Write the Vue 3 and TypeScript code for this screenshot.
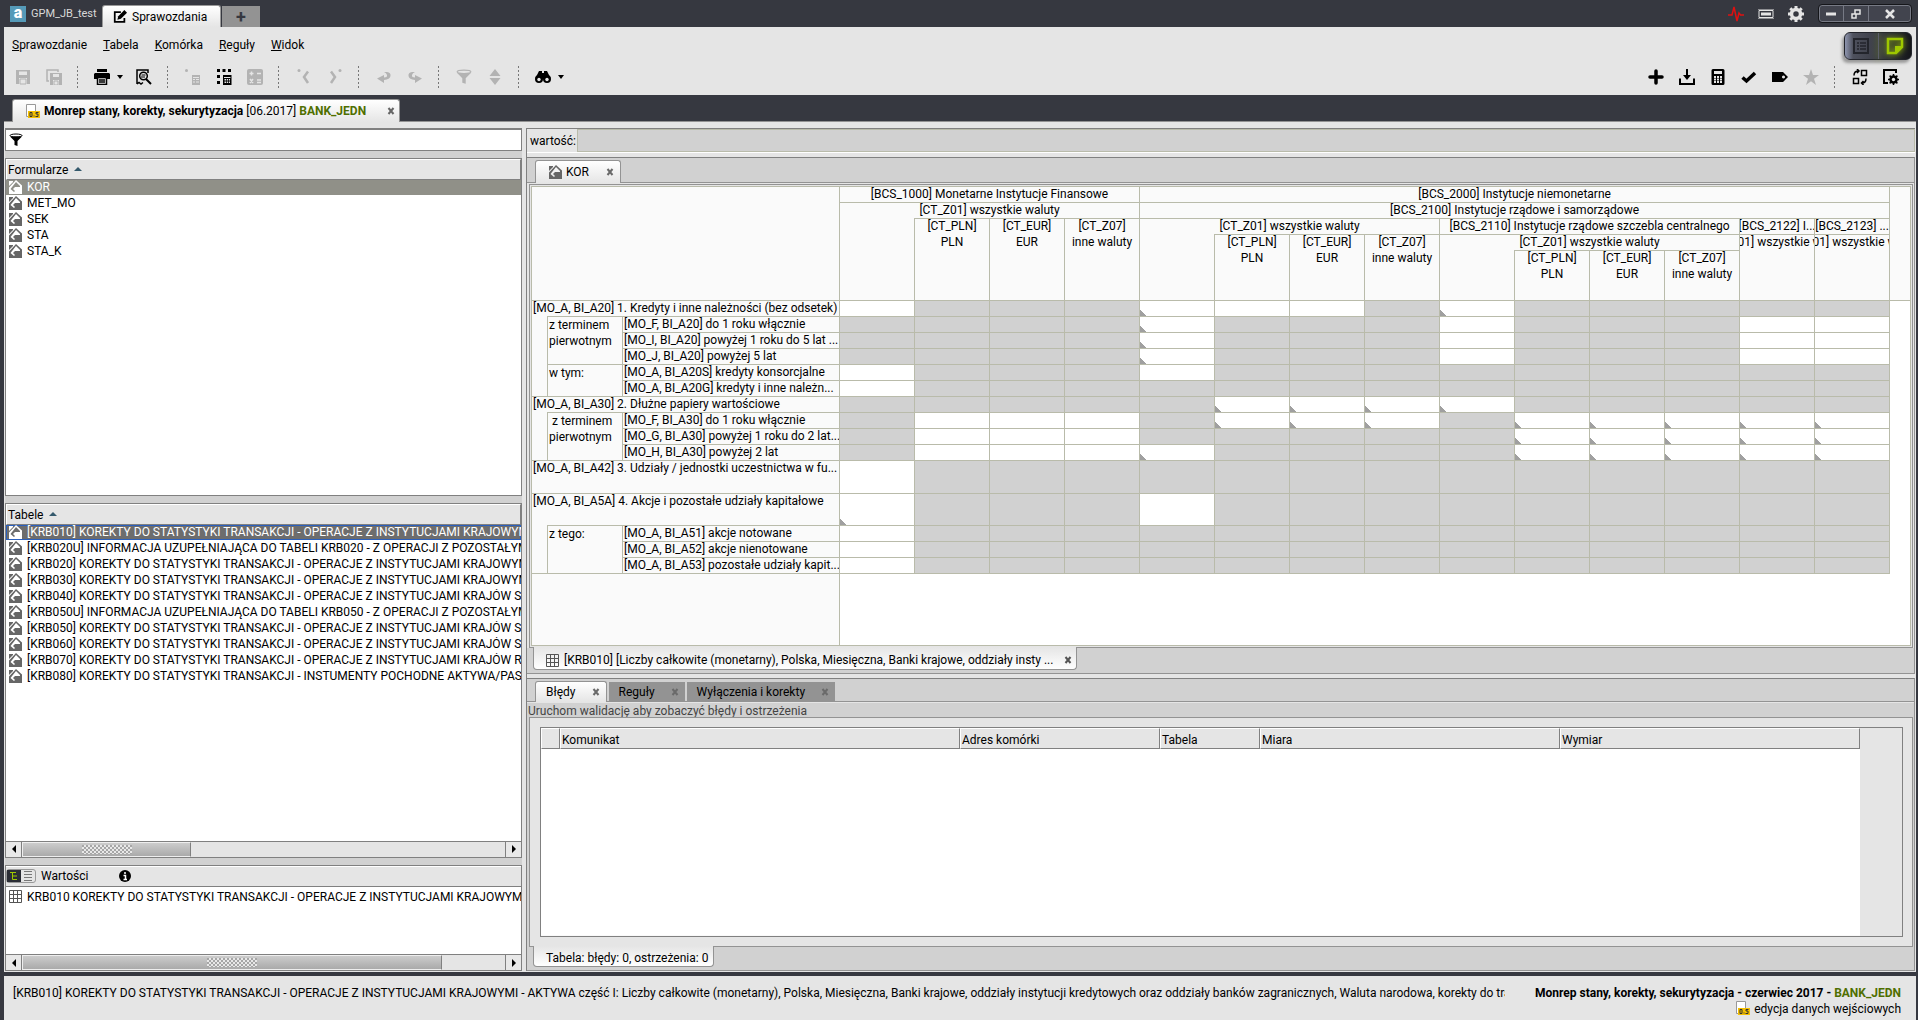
<script setup lang="ts">
import { ref } from 'vue'

interface HeadCell { text: string; sub?: string; cols?: number; rows?: number; cls?: string }
interface RowHead { text: string; cols?: number; rows?: number; cls: string }
interface DataRow { heads: RowHead[]; cells: string; cls?: string }

const menu = ['Sprawozdanie', 'Tabela', 'Komórka', 'Reguły', 'Widok']

const forms = ['KOR', 'MET_MO', 'SEK', 'STA', 'STA_K']
const selectedForm = ref('KOR')

const tables = [
  '[KRB010] KOREKTY DO STATYSTYKI TRANSAKCJI - OPERACJE Z INSTYTUCJAMI KRAJOWYMI - AKTYWA',
  '[KRB020U] INFORMACJA UZUPEŁNIAJĄCA DO TABELI KRB020 - Z OPERACJI Z POZOSTAŁYMI INSTYTUCJAMI',
  '[KRB020] KOREKTY DO STATYSTYKI TRANSAKCJI - OPERACJE Z INSTYTUCJAMI KRAJOWYMI - AKTYWA',
  '[KRB030] KOREKTY DO STATYSTYKI TRANSAKCJI - OPERACJE Z INSTYTUCJAMI KRAJOWYMI - AKTYWA',
  '[KRB040] KOREKTY DO STATYSTYKI TRANSAKCJI - OPERACJE Z INSTYTUCJAMI KRAJÓW STREFY EURO',
  '[KRB050U] INFORMACJA UZUPEŁNIAJĄCA DO TABELI KRB050 - Z OPERACJI Z POZOSTAŁYMI INSTYTUCJAMI',
  '[KRB050] KOREKTY DO STATYSTYKI TRANSAKCJI - OPERACJE Z INSTYTUCJAMI KRAJÓW STREFY EURO',
  '[KRB060] KOREKTY DO STATYSTYKI TRANSAKCJI - OPERACJE Z INSTYTUCJAMI KRAJÓW STREFY EURO',
  '[KRB070] KOREKTY DO STATYSTYKI TRANSAKCJI - OPERACJE Z INSTYTUCJAMI KRAJÓW RESZTY ŚWIATA',
  '[KRB080] KOREKTY DO STATYSTYKI TRANSAKCJI - INSTUMENTY POCHODNE AKTYWA/PASYWA',
]
const selectedTable = ref(0)

const currencies = (rows: number): HeadCell[] => [
  { text: '', rows, cls: 'open' },
  { text: '[CT_PLN]', sub: 'PLN', rows },
  { text: '[CT_EUR]', sub: 'EUR', rows },
  { text: '[CT_Z07]', sub: 'inne waluty', rows },
]
const allCur = '[CT_Z01] wszystkie waluty'
const headRows: HeadCell[][] = [
  [
    { text: '', cols: 3, rows: 5, cls: 'corner' },
    { text: '[BCS_1000] Monetarne Instytucje Finansowe', cols: 4 },
    { text: '[BCS_2000] Instytucje niemonetarne', cols: 10 },
    { text: '', rows: 5 },
  ],
  [
    { text: allCur, cols: 4 },
    { text: '[BCS_2100] Instytucje rządowe i samorządowe', cols: 10 },
  ],
  [
    ...currencies(3),
    { text: allCur, cols: 4 },
    { text: '[BCS_2110] Instytucje rządowe szczebla centralnego', cols: 4 },
    { text: '[BCS_2122] I...' },
    { text: '[BCS_2123] ...' },
  ],
  [
    ...currencies(2),
    { text: allCur, cols: 4 },
    { text: allCur, rows: 2 },
    { text: allCur, rows: 2 },
  ],
  currencies(1),
]

const top = (text: string): RowHead => ({ text, cols: 3, cls: 'lvl1' })
const leaf = (text: string): RowHead => ({ text, cls: 'lvl3' })
const indent = (rows: number): RowHead => ({ text: '', rows, cls: 'indent' })
const group = (text: string, rows: number): RowHead => ({ text, rows, cls: 'lvl2' })

// g – blocked cell, w – editable cell, t – editable cell with a corner mark
const dataRows: DataRow[] = [
  { heads: [top('[MO_A, BI_A20] 1. Kredyty i inne należności (bez odsetek)')], cells: 'wgggtwwgtggggg' },
  { heads: [indent(5), group('z terminem pierwotnym', 3), leaf('[MO_F, BI_A20] do 1 roku włącznie')], cells: 'ggggtgggwgggww' },
  { heads: [leaf('[MO_I, BI_A20] powyżej 1 roku do 5 lat ...')], cells: 'ggggtgggwgggww' },
  { heads: [leaf('[MO_J, BI_A20] powyżej 5 lat')], cells: 'ggggtgggwgggww' },
  { heads: [group('w tym:', 2), leaf('[MO_A, BI_A20S] kredyty konsorcjalne')], cells: 'wgggwggggggggg' },
  { heads: [leaf('[MO_A, BI_A20G] kredyty i inne należn...')], cells: 'wggggggggggggg' },
  { heads: [top('[MO_A, BI_A30] 2. Dłużne papiery wartościowe')], cells: 'gggggttttggggg' },
  { heads: [indent(3), group('\u00a0z terminem pierwotnym', 3), leaf('[MO_F, BI_A30] do 1 roku włącznie')], cells: 'gwwwgtttgttttt' },
  { heads: [leaf('[MO_G, BI_A30] powyżej 1 roku do 2 lat...')], cells: 'gwwwgggggttttt' },
  { heads: [leaf('[MO_H, BI_A30] powyżej 2 lat')], cells: 'gwwwtggggttttt' },
  { heads: [top('[MO_A, BI_A42] 3. Udziały / jednostki uczestnictwa w fu...')], cells: 'wggggggggggggg', cls: 'tall' },
  { heads: [top('[MO_A, BI_A5A] 4. Akcje i pozostałe udziały kapitałowe')], cells: 'tgggwggggggggg', cls: 'double' },
  { heads: [indent(3), group('z tego:', 3), leaf('[MO_A, BI_A51] akcje notowane')], cells: 'wggggggggggggg' },
  { heads: [leaf('[MO_A, BI_A52] akcje nienotowane')], cells: 'wggggggggggggg' },
  { heads: [leaf('[MO_A, BI_A53] pozostałe udziały kapit...')], cells: 'wggggggggggggg' },
]

const bottomTabs = ['Błędy', 'Reguły', 'Wyłączenia i korekty']
const activeBottom = ref('Błędy')

const statusText =
  '[KRB010] KOREKTY DO STATYSTYKI TRANSAKCJI - OPERACJE Z INSTYTUCJAMI KRAJOWYMI - AKTYWA część I: Liczby całkowite (monetarny), Polska, Miesięczna, Banki krajowe, oddziały instytucji kredytowych oraz oddziały banków zagranicznych, Waluta narodowa, korekty do transakcji'
</script>

<template>
  <svg class="defs" aria-hidden="true">
    <symbol id="i-house" viewBox="0 0 14 14"><path d="M1 1h4v1L1 6zM8 0 1 7.500V14h13V5.500zM8 2l4 4v1H7L5 9l2 2-1 1-3.500-3z" fill="currentColor" fill-rule="evenodd"/></symbol>
    <symbol id="i-grid" viewBox="0 0 13 13"><path d="M.5.5h12v12H.5zM4.500.5v12M8.500.5v12M.5 4.500h12M.5 8.500h12" fill="none" stroke="currentColor"/></symbol>
    <symbol id="i-filter" viewBox="0 0 14 14"><ellipse cx="7" cy="2.500" rx="6" ry="1.500" fill="none" stroke="currentColor"/><path d="M1 3.500h12L8.500 8v5l-3-1V8z" fill="currentColor"/></symbol>
    <symbol id="i-close" viewBox="0 0 8 8"><path d="M1.500 1l5 6M6.500 1l-5 6" stroke="currentColor" stroke-width="2"/></symbol>
    <symbol id="i-doc" viewBox="0 0 14 14"><path d="M.5.5h9v12h-9z" fill="#fff" stroke="#999"/><path d="M2 7h12v7H2z" fill="#f5c000"/><path d="M4 8.500h2v4H4zM7.500 12h1M12.500 8.500H10v1.500h2v2.500H9.500" fill="none" stroke="#333"/></symbol>
    <symbol id="i-save" viewBox="0 0 16 16"><path d="M1 1h14v14H12V9H4v6H1zM4 2.500V6h8V2.500z" fill="currentColor" fill-rule="evenodd"/><path d="M5 10h6v5H5z" fill="none" stroke="currentColor"/></symbol>
    <symbol id="i-saveall" viewBox="0 0 16 16"><path d="M3 12H1V1h11v2" fill="none" stroke="currentColor" stroke-width="1.500"/><path d="M4 4h12v12h-3v-5H7v5H4zM7 5v3h6V5z" fill="currentColor" fill-rule="evenodd"/><path d="M8 12h4v4H8z" fill="none" stroke="currentColor"/></symbol>
    <symbol id="i-print" viewBox="0 0 16 16"><path d="M3 0h10v3H3zM1 4h14l1 1v5h-3V9H3v1H0V5z" fill="currentColor"/><path d="M3.500 8.500h9v7h-9zM5 11h6M5 13h6" fill="none" stroke="currentColor" stroke-width="1.500"/></symbol>
    <symbol id="i-preview" viewBox="0 0 16 16"><path d="M1 15V1h11v3M1 15l2-1.500L5 15l2-1.500" fill="none" stroke="currentColor" stroke-width="1.500"/><circle cx="7.500" cy="7" r="3.800" fill="none" stroke="currentColor" stroke-width="1.500"/><path d="M5 8h4M5.500 6h4" stroke="currentColor"/><path d="M10 10l5 5" stroke="currentColor" stroke-width="2"/></symbol>
    <symbol id="i-calc" viewBox="0 0 16 16"><path d="M3 0h10q1.500 0 1.500 1.500v13Q14.500 16 13 16H3q-1.500 0-1.500-1.500v-13Q1.500 0 3 0zM4 2v3h8V2zM4 7v2h2V7zM7 7v2h2V7zM10 7v2h2V7zM4 9.500v2h2v-2zM7 9.500v2h2v-2zM10 9.500v2h2v-2zM4 12v2h2v-2zM7 12v2h2v-2zM10 12v2h2v-2z" fill="currentColor" fill-rule="evenodd"/></symbol>
    <symbol id="i-calc1" viewBox="0 0 16 16"><circle cx="1.500" cy="1.500" r="1.500" fill="currentColor"/><path d="M7 6h8v10H7zM8 8v1h6V8zM8 10v1h2v-1zM11 10v1h3v-1zM8 12.500v1h2v-1zM11 12.500v1h3v-1z" fill="currentColor" fill-rule="evenodd"/></symbol>
    <symbol id="i-calcall" viewBox="0 0 16 16"><path d="M1 0h3v3H1zM6.500 0h3v3h-3zM12 0h3v3h-3zM1 6h3v3H1zM1 12h3v3H1zM7 6h8.500v10H7zM8 8v1h6.500V8zM8.500 10v1.500H10V10zM10.700 10v1.500h1.300V10zM12.800 10v1.500H14V10zM8.500 12.500V14H10v-1.500zM10.700 12.500V14h1.300v-1.500zM12.800 12.500V14H14v-1.500z" fill="currentColor" fill-rule="evenodd"/></symbol>
    <symbol id="i-ops" viewBox="0 0 16 16"><rect width="16" height="16" rx="2" fill="currentColor"/><path d="M2.500 4.500h4M4.500 2.500v4M10 4.500h4M3 10l3 4M6 10l-3 4M10 11h4M10 13.500h4" stroke="#e5e5e5" stroke-width="1.500"/></symbol>
    <symbol id="i-prev" viewBox="0 0 16 16"><path d="M12 2.500L8 8l4 6" fill="none" stroke="currentColor" stroke-width="2.500"/><circle cx="3" cy="1.500" r="1.500" fill="currentColor"/></symbol>
    <symbol id="i-next" viewBox="0 0 16 16"><path d="M4 2.500L8 8l-4 6" fill="none" stroke="currentColor" stroke-width="2.500"/><circle cx="13" cy="1.500" r="1.500" fill="currentColor"/></symbol>
    <symbol id="i-undo" viewBox="0 0 16 16"><path d="M8 3h3q4 .5 3.500 4Q14 10.500 8 11v3L1 9.500 8 6v2.500q3.500 0 3-2.500-.5-2-3-3z" fill="currentColor"/></symbol>
    <symbol id="i-redo" viewBox="0 0 16 16"><path d="M8 3H5Q1 3.500 1.500 7 2 10.500 8 11v3l7-4.500L8 6v2.500Q4.500 8.500 5 6q.5-2 3-3z" fill="currentColor"/></symbol>
    <symbol id="i-sort" viewBox="0 0 16 16"><path d="M8 0l5.500 7h-11zM8 16l5.500-7h-11z" fill="currentColor"/></symbol>
    <symbol id="i-bino" viewBox="0 0 16 16"><path d="M4 2h3v2h2V2h3l3.500 7H.5z" fill="currentColor"/><circle cx="4" cy="10" r="4" fill="currentColor"/><circle cx="12" cy="10" r="4" fill="currentColor"/><circle cx="4" cy="10.500" r="1.700" fill="#e5e5e5"/><circle cx="12" cy="10.500" r="1.700" fill="#e5e5e5"/><path d="M6 6h4v4H6z" fill="currentColor"/></symbol>
    <symbol id="i-plus" viewBox="0 0 16 16"><path d="M8 2v12M2 8h12" stroke="currentColor" stroke-width="3.500" stroke-linecap="round"/></symbol>
    <symbol id="i-down" viewBox="0 0 16 16"><path d="M7 0h2v6h3l-4 5-4-5h3z" fill="currentColor"/><path d="M1 9.500V15h14V9.500" fill="none" stroke="currentColor" stroke-width="2"/></symbol>
    <symbol id="i-check" viewBox="0 0 16 16"><path d="M1.500 8.500L5.500 12 14 4" fill="none" stroke="currentColor" stroke-width="3.500"/></symbol>
    <symbol id="i-tag" viewBox="0 0 16 16"><path d="M0 3h11l5 5-5 5H0zM11.500 6.500a1.500 1.500 0 1 0 .01 0z" fill="currentColor" fill-rule="evenodd"/></symbol>
    <symbol id="i-star" viewBox="0 0 16 16"><path d="M8 0l2 6h6l-5 3.800L13 16l-5-3.800L3 16l2-6.200L0 6h6z" fill="currentColor"/></symbol>
    <symbol id="i-swap" viewBox="0 0 16 16"><path d="M9.500 1.500h5v5h-5zM1.500 9.500h5v5h-5zM2 6.500Q2 2 6.500 2M5 0l2 2-2 2M14 9.500q0 4.500-4 4.500M11.500 12l-2 2 2 2" fill="none" stroke="currentColor" stroke-width="1.500"/></symbol>
    <symbol id="i-winset" viewBox="0 0 16 16"><path d="M5 14H1V1h12v3" fill="none" stroke="currentColor" stroke-width="2"/><circle cx="10.500" cy="10.500" r="3" fill="none" stroke="currentColor" stroke-width="2.500"/><path d="M10.500 5v11M5 10.500h11M6.600 6.600l7.800 7.800M14.400 6.600l-7.800 7.800" stroke="currentColor" stroke-width="1.500"/><circle cx="10.500" cy="10.500" r="1.700" fill="#e5e5e5"/></symbol>
    <symbol id="i-gear" viewBox="0 0 16 16"><circle cx="8" cy="8" r="4.500" fill="none" stroke="currentColor" stroke-width="3.500"/><path d="M8 0v3M8 13v3M0 8h3M13 8h3M2.300 2.300l2.200 2.200M11.500 11.500l2.200 2.200M13.700 2.300l-2.200 2.200M4.500 11.500l-2.200 2.200" stroke="currentColor" stroke-width="3"/></symbol>
    <symbol id="i-pulse" viewBox="0 0 16 16"><path d="M0 9h4L6 1l3 14 2-8 1.500 2H16" fill="none" stroke="currentColor" stroke-width="1.500"/></symbol>
    <symbol id="i-chip" viewBox="0 0 16 16"><path d="M1 4.500h14v7H1z" fill="none" stroke="currentColor"/><path d="M3 6.500h10v3H3z" fill="currentColor"/><path d="M.5 3.500h15M.5 12.500h15" stroke="currentColor" stroke-dasharray="1 1"/></symbol>
    <symbol id="i-edit" viewBox="0 0 16 16"><path d="M9 2.500H2v11h11V9" fill="none" stroke="currentColor" stroke-width="2"/><path d="M5 11l1-4 7-7 3 3-7 7z" fill="currentColor"/></symbol>
  </svg>

  <div class="app">
    <header class="titlebar">
      <div class="logo">a</div>
      <span class="appname">GPM_JB_test</span>
      <nav class="apptabs">
        <button class="apptab"><svg width="16" height="14"><use href="#i-edit" /></svg>Sprawozdania</button>
        <button class="newtab" aria-label="Nowa karta">+</button>
      </nav>
      <div class="sys">
        <svg class="red" width="16" height="16"><use href="#i-pulse" /></svg>
        <svg width="16" height="16"><use href="#i-chip" /></svg>
        <svg width="16" height="16"><use href="#i-gear" /></svg>
      </div>
      <div class="winbtns">
        <button aria-label="Minimalizuj"><svg width="12" height="12"><path d="M1 4.500h10v3H1z" fill="#e5e5e5" /></svg></button>
        <button aria-label="Przywróć"><svg width="12" height="12"><path d="M5 2h5v4H5zM2 6h4v4H2z" fill="none" stroke="#e5e5e5" stroke-width="1.500" /></svg></button>
        <button class="wide" aria-label="Zamknij"><svg width="12" height="12"><path d="M2 2l8 8M10 2l-8 8" stroke="#e5e5e5" stroke-width="2.500" /></svg></button>
      </div>
    </header>

    <section class="toolarea">
      <div class="menurow">
        <nav class="menu">
          <button v-for="m in menu" :key="m"><u>{{ m[0] }}</u>{{ m.slice(1) }}</button>
        </nav>
        <div class="switch">
          <button aria-label="Lista"><svg width="16" height="16"><path d="M1 1h14v14H1z" fill="none" stroke="#23252c" stroke-width="2" /><path d="M4 5h2M4 8h2M4 11h2M7 5h6M7 8h6M7 11h6" stroke="#23252c" stroke-width="1.500" /></svg></button>
          <button class="on" aria-label="Arkusz"><svg width="18" height="18"><path d="M2 2h14v8l-6 6H2z" fill="none" stroke="#9fc800" stroke-width="2.500" /><path d="M9 16V9h7z" fill="#9fc800" /></svg></button>
        </div>
      </div>
      <div class="toolbar">
        <div class="tools">
          <button class="off" aria-label="Zapisz"><svg><use href="#i-save" /></svg></button>
          <button class="off" aria-label="Zapisz wszystko"><svg><use href="#i-saveall" /></svg></button>
          <i class="sep"></i>
          <button class="drop" aria-label="Drukuj"><svg><use href="#i-print" /></svg></button>
          <button aria-label="Podgląd"><svg><use href="#i-preview" /></svg></button>
          <i class="sep"></i>
          <button class="off" aria-label="Przelicz komórkę"><svg><use href="#i-calc1" /></svg></button>
          <button aria-label="Przelicz tabelę"><svg><use href="#i-calcall" /></svg></button>
          <button class="off" aria-label="Działania"><svg><use href="#i-ops" /></svg></button>
          <i class="sep"></i>
          <button class="off" aria-label="Poprzednia"><svg><use href="#i-prev" /></svg></button>
          <button class="off" aria-label="Następna"><svg><use href="#i-next" /></svg></button>
          <i class="sep"></i>
          <button class="off" aria-label="Cofnij"><svg><use href="#i-undo" /></svg></button>
          <button class="off" aria-label="Ponów"><svg><use href="#i-redo" /></svg></button>
          <i class="sep"></i>
          <button class="off" aria-label="Filtruj"><svg><use href="#i-filter" /></svg></button>
          <button class="off" aria-label="Sortuj"><svg><use href="#i-sort" /></svg></button>
          <i class="sep"></i>
          <button class="drop" aria-label="Szukaj"><svg><use href="#i-bino" /></svg></button>
        </div>
        <div class="tools">
          <button aria-label="Dodaj"><svg><use href="#i-plus" /></svg></button>
          <button aria-label="Importuj"><svg><use href="#i-down" /></svg></button>
          <button aria-label="Kalkulator"><svg><use href="#i-calc" /></svg></button>
          <button aria-label="Zatwierdź"><svg><use href="#i-check" /></svg></button>
          <button aria-label="Etykieta"><svg><use href="#i-tag" /></svg></button>
          <button class="off" aria-label="Ulubione"><svg><use href="#i-star" /></svg></button>
          <i class="sep"></i>
          <button aria-label="Zamień"><svg><use href="#i-swap" /></svg></button>
          <button aria-label="Ustawienia okna"><svg><use href="#i-winset" /></svg></button>
        </div>
      </div>
    </section>

    <div class="doctabs">
      <div class="doctab">
        <svg width="14" height="14"><use href="#i-doc" /></svg>
        <button><b>Monrep stany, korekty, sekurytyzacja</b> [06.2017] <b class="green">BANK_JEDN</b></button>
        <button class="x" aria-label="Zamknij"><svg width="8" height="8"><use href="#i-close" /></svg></button>
      </div>
    </div>

    <main class="work">
      <aside class="side">
        <label class="filter"><svg width="14" height="14"><use href="#i-filter" /></svg><input type="text" aria-label="Filtr" /></label>

        <section class="pane forms">
          <table class="list">
            <thead><tr><th>Formularze <i class="asc"></i></th></tr></thead>
            <tbody>
              <tr v-for="f in forms" :key="f" :class="{ sel: f === selectedForm }" @click="selectedForm = f">
                <td><svg width="14" height="14"><use href="#i-house" /></svg>{{ f }}</td>
              </tr>
            </tbody>
          </table>
        </section>

        <section class="pane tables">
          <table class="list dark">
            <thead><tr><th>Tabele <i class="asc"></i></th></tr></thead>
            <tbody>
              <tr v-for="(t, i) in tables" :key="i" :class="{ sel: i === selectedTable }" @click="selectedTable = i">
                <td><svg width="14" height="14"><use href="#i-house" /></svg>{{ t }}</td>
              </tr>
            </tbody>
          </table>
          <div class="hscroll">
            <button class="l" aria-label="W lewo"></button>
            <div class="track"><div class="thumb" :style="{ width: '35%' }"><i></i></div></div>
            <button class="r" aria-label="W prawo"></button>
          </div>
        </section>

        <section class="pane values">
          <div class="valhead">
            <div class="mini">
              <button class="on" aria-label="Drzewo"><svg width="10" height="10"><path d="M1 1.500h6M3.500 1.500v7H8M3.500 5H8" fill="none" stroke="#9fc800" /></svg></button>
              <button aria-label="Lista"><svg width="10" height="10"><path d="M1 .5h8M1 3.500h8M1 6.500h8M1 9.500h8" stroke="#777" /></svg></button>
            </div>
            <span>Wartości</span>
            <svg class="info" width="12" height="12"><circle cx="6" cy="6" r="6" /><path d="M6 2v2M4.500 5.500h2v4M4.500 9.500h3.500" stroke="#fff" stroke-width="1.500" fill="none" /></svg>
          </div>
          <div class="valrow"><svg width="13" height="13"><use href="#i-grid" /></svg>KRB010 KOREKTY DO STATYSTYKI TRANSAKCJI - OPERACJE Z INSTYTUCJAMI KRAJOWYMI - AKTYWA</div>
          <div class="hscroll">
            <button class="l" aria-label="W lewo"></button>
            <div class="track"><div class="thumb" :style="{ width: '87%' }"><i></i></div></div>
            <button class="r" aria-label="W prawo"></button>
          </div>
        </section>
      </aside>

      <section class="content">
        <div class="formula">
          <label for="val">wartość:</label>
          <input id="val" type="text" readonly />
        </div>

        <section class="editor">
          <div class="tabs">
            <div class="tab on kor">
              <svg width="14" height="14"><use href="#i-house" /></svg>
              <button>KOR</button>
              <button class="x" aria-label="Zamknij"><svg width="8" height="8"><use href="#i-close" /></svg></button>
            </div>
          </div>
          <div class="frame">
            <div class="inner">
              <div class="sheet">
                <table class="grid">
                  <colgroup>
                    <col class="c-ind" /><col class="c-val" /><col class="c-leaf" />
                    <col v-for="n in 14" :key="n" class="c-val" />
                    <col />
                  </colgroup>
                  <thead>
                    <tr v-for="(r, ri) in headRows" :key="ri" :class="{ last: ri === 4 }">
                      <th v-for="(c, ci) in r" :key="ci" :colspan="c.cols" :rowspan="c.rows" :class="c.cls">
                        <div class="htext"><span>{{ c.text }}</span></div>
                        <div v-if="c.sub" class="htext"><span>{{ c.sub }}</span></div>
                      </th>
                    </tr>
                  </thead>
                  <tbody>
                    <tr v-for="(r, ri) in dataRows" :key="ri" :class="r.cls">
                      <th v-for="(h, hi) in r.heads" :key="hi" scope="row" :colspan="h.cols" :rowspan="h.rows" :class="h.cls">{{ h.text }}</th>
                      <td v-for="(c, ci) in r.cells" :key="ci" :class="c"></td>
                      <td class="end" :class="{ first: ri === 0 }"></td>
                    </tr>
                  </tbody>
                </table>
                <div class="rest"><div class="resthead"></div><div class="restline"></div></div>
              </div>
            </div>
          </div>
          <div class="undertabs">
            <div class="undertab doc">
              <svg width="13" height="13"><use href="#i-grid" /></svg>
              <button>[KRB010] [Liczby całkowite (monetarny), Polska, Miesięczna, Banki krajowe, oddziały insty ...</button>
              <button class="x" aria-label="Zamknij"><svg width="8" height="8"><use href="#i-close" /></svg></button>
            </div>
          </div>
        </section>

        <section class="errors">
          <div class="tabs">
            <div v-for="t in bottomTabs" :key="t" class="tab" :class="{ on: t === activeBottom }">
              <button @click="activeBottom = t">{{ t }}</button>
              <button class="x" aria-label="Zamknij"><svg width="8" height="8"><use href="#i-close" /></svg></button>
            </div>
          </div>
          <p class="hint">Uruchom walidację aby zobaczyć błędy i ostrzeżenia</p>
          <div class="errframe">
            <div class="errbox">
              <table class="errtable">
                <thead>
                  <tr><th class="e0"></th><th class="e1">Komunikat</th><th class="e2">Adres komórki</th><th class="e3">Tabela</th><th class="e4">Miara</th><th>Wymiar</th></tr>
                </thead>
                <tbody></tbody>
              </table>
            </div>
          </div>
          <div class="undertabs">
            <div class="undertab"><button>Tabela: błędy: 0, ostrzeżenia: 0</button></div>
          </div>
        </section>
      </section>
    </main>

    <footer class="status">
      <div class="path">{{ statusText }}</div>
      <div class="ctx">
        <div><b>Monrep stany, korekty, sekurytyzacja - czerwiec 2017 - <span class="green">BANK_JEDN</span></b></div>
        <div class="mode"><svg width="14" height="14"><use href="#i-doc" /></svg>edycja danych wejściowych</div>
      </div>
    </footer>
  </div>
</template>

<style>
body { background: #363840; overflow: hidden; }
</style>

<style scoped>
* { box-sizing: border-box; }
button { font: inherit; color: inherit; background: none; border: 0; padding: 0; margin: 0; white-space: nowrap; }
svg { flex: none; }
.defs { position: absolute; width: 0; height: 0; }
.app { height: 100vh; display: flex; flex-direction: column; padding: 0 2px 0 4px; background: #363840; color: #000; font: 12px/16px Roboto, "Open Sans", sans-serif; }
.green { color: #4f6f00; }

.titlebar { height: 27px; flex: none; display: flex; align-items: center; color: #d8d8d8; }
.logo { width: 16px; height: 16px; margin: 0 5px 0 6px; background: #559ab8; color: #fff; font-weight: 900; font-size: 16px; line-height: 14px; text-align: center; }
.appname { width: 71px; font-size: 11px; }
.apptabs { display: flex; align-self: flex-end; align-items: flex-end; }
.apptab { display: flex; align-items: center; gap: 4px; width: 119px; height: 22px; padding-left: 9px; color: #000; background: linear-gradient(#fff, #e5e5e5); border: 1px solid #999; border-bottom: 0; border-radius: 3px 3px 0 0; }
.newtab { width: 38px; height: 21px; margin-left: 1px; background: #939393; color: #363840; font-weight: 700; font-size: 18px; }
.sys { display: flex; gap: 14px; margin-left: auto; color: #e5e5e5; }
.sys .red { color: #e01010; }
.winbtns { display: flex; height: 19px; margin: 0 4px 0 14px; border: 1px solid #15161a; border-radius: 4px; box-shadow: inset 0 0 0 1px #777a85; background: #42444e; }
.winbtns button { width: 25px; display: grid; place-items: center; border-right: 1px solid #777a85; }
.winbtns .wide { width: 42px; border: 0; }

.toolarea { flex: none; height: 68px; background: #e5e5e5; display: flex; flex-direction: column; }
.menurow { display: flex; justify-content: space-between; height: 32px; padding: 5px 4px 0 8px; }
.menu { display: flex; align-items: center; gap: 16px; height: 25px; }
.switch { display: flex; width: 68px; height: 28px; border: 1px solid #23252c; border-radius: 6px; background: linear-gradient(90deg, #8f96b0, #4e515d 8px, #3a3c46 50%, #15161a); box-shadow: -2px 3px 3px #9a9a9a; }
.switch button { flex: 1; display: grid; place-items: center; }
.switch .on { border-left: 1px solid #5b5e6a; filter: drop-shadow(0 0 3px #9fc800); }
.toolbar { display: flex; justify-content: space-between; padding: 6px 10px 0 3px; }
.tools { display: flex; align-items: center; height: 24px; }
.tools button { width: 31px; height: 24px; display: flex; align-items: center; justify-content: center; }
.tools svg { width: 16px; height: 16px; }
.tools .off { color: #b3b3b3; }
.tools .drop { width: 41px; gap: 7px; justify-content: flex-start; padding-left: 7px; }
.tools .drop::after { content: ""; border: 3px solid transparent; border-top: 4px solid #000; border-bottom: 0; }
.sep { width: 1px; height: 22px; margin: 0 9px 0 8px; background: repeating-linear-gradient(#777 0 2px, transparent 2px 4px); }

.doctabs { flex: none; height: 27px; padding: 4px 8px 0; border-bottom: 1px solid #939393; }
.doctab { display: flex; align-items: center; width: 388px; height: 23px; padding-left: 13px; gap: 4px; background: linear-gradient(#fff, #e5e5e5); border: 1px solid #939393; border-bottom: 0; border-radius: 3px 3px 0 0; }
.x { color: #777; display: grid; place-items: center; margin-left: auto; width: 16px; }
.doctab .x { color: #666; }

.work { flex: 1; min-height: 0; display: flex; gap: 4px; padding: 6px 1px 1px; background: #e5e5e5; }
.side { flex: 0 0 517px; min-width: 0; display: flex; flex-direction: column; gap: 7px; background: #d1d1d1; }
.filter { flex: none; display: flex; align-items: center; height: 23px; padding-left: 3px; background: #fff; border: 1px solid #808080; border-top-width: 2px; }
.filter input { flex: 1; border: 0; outline: 0; background: none; font: inherit; }
.pane { display: flex; flex-direction: column; min-height: 0; background: #fff; border: 1px solid #808080; overflow: hidden; }
.forms { flex: 339 1 0; }
.tables { flex: 356 1 0; }
.values { flex: 105 1 0; }
.list { width: 100%; table-layout: fixed; border-spacing: 0; color: #000; }
.list th { height: 21px; padding: 0 1px; text-align: left; font-weight: 400; line-height: 18px; background: #e5e5e5; border: 1px solid #fff; border-right-color: #808080; border-bottom-color: #808080; }
.asc { display: inline-block; margin: 0 0 3px 3px; border: 4px solid transparent; border-bottom: 4px solid #34596c; border-top: 0; }
.list td { height: 16px; padding: 0 0 0 2px; line-height: 15px; white-space: nowrap; overflow: hidden; border-bottom: 1px solid transparent; background-clip: padding-box; }
.list td svg { margin-right: 5px; vertical-align: top; color: #666; }
.list .sel td { background-color: #909088; color: #fff; }
.list .sel svg { color: #fff; }
.list.dark .sel td { background-color: #6d6d6d; box-shadow: inset 0 0 0 1px #2a5fbd; }
.hscroll { flex: none; display: flex; height: 16px; margin-top: auto; border-top: 1px solid #808080; }
.hscroll button { width: 16px; display: grid; place-items: center; background: #e8e8e8; }
.hscroll .l { border-right: 1px solid #808080; }
.hscroll .r { border-left: 1px solid #808080; }
.hscroll .l::after, .hscroll .r::after { content: ""; border: 4px solid transparent; }
.hscroll .l::after { border-right: 4px solid #000; border-left: 0; }
.hscroll .r::after { border-left: 4px solid #000; border-right: 0; }
.track { flex: 1; background: #e5e5e5; }
.thumb { height: 100%; display: grid; place-items: center; border: 1px solid #eee; border-right: 1px solid #808080; background: linear-gradient(#ccc, #aaa); }
.thumb i { width: 50px; height: 9px; background: repeating-conic-gradient(#e8e8e8 0 25%, #a6a6a6 0 50%) 0 0 / 4px 4px; }
.valhead { display: flex; align-items: center; height: 21px; flex: none; background: #e5e5e5; border-top: 1px solid #fff; border-bottom: 1px solid #808080; }
.mini { display: flex; margin-right: 5px; width: 30px; border: 1px solid #999; border-radius: 3px; }
.mini button { flex: 1; height: 12px; display: grid; place-items: center; }
.mini .on { background: #2b2d35; }
.info { margin-left: 31px; }
.valrow { display: flex; align-items: center; gap: 5px; height: 20px; padding-left: 3px; white-space: nowrap; }
.valrow svg { color: #555; }

.content { flex: 1; min-width: 0; display: flex; flex-direction: column; border-left: 1px solid #808080; }
.formula { flex: none; height: 25px; display: flex; border-top: 1px solid #808080; border-bottom: 1px solid #fff; }
.formula label { width: 50px; padding: 1px 0 0 3px; line-height: 22px; }
.formula input { flex: 1; min-width: 0; border: 1px solid #b9bbaa; background: #d1d1d1; outline: 0; }
.editor, .errors { display: flex; flex-direction: column; min-height: 0; background: #d1d1d1; border: 1px solid #939393; border-left: 0; border-top-color: #808080; }
.editor { flex: 518 1 0; margin-top: 4px; }
.errors { flex: 292 1 0; margin-top: 4px; }
.tabs { flex: none; display: flex; align-items: flex-end; gap: 2px; height: 25px; padding: 0 8px; border-bottom: 1px solid #939393; }
.errors .tabs { height: 23px; }
.tab { display: flex; align-items: center; height: 19px; padding: 0 2px 0 10px; gap: 12px; background: #939393; }
.tab .x { color: #6a6a6a; }
.tab.on { height: 21px; margin-bottom: -1px; border: 1px solid #939393; border-bottom: 0; border-radius: 3px 3px 0 0; background: linear-gradient(#fff, #e5e5e5); }
.tab.kor { width: 86px; height: 23px; gap: 4px; padding-left: 12px; }
.kor svg { color: #666; }
.kor .x svg { color: #6a6a6a; }
.frame { flex: 1; min-height: 0; display: flex; padding: 1px 1px 0 2px; background: #e5e5e5; }
.inner { flex: 1; min-width: 0; display: flex; padding: 1px; border: 1px solid #939393; }
.sheet { flex: 1; min-width: 0; display: flex; flex-direction: column; border: 1px solid #b9bbaa; border-top: 0; background: #fff; overflow: hidden; }
.grid { width: 100%; table-layout: fixed; border-spacing: 0; }
.c-ind { width: 15px; }
.c-leaf { width: 217px; }
.c-val { width: 75px; }
.grid th, .grid td { height: 16px; padding: 0; font-weight: 400; line-height: 15px; vertical-align: top; border-top: 1px solid #b9bbaa; border-left: 1px solid #b9bbaa; overflow: hidden; }
.grid th { background: #fafafa; }
.grid .open, .grid .indent { border-top: 0; }
.grid .corner, .grid .indent, .grid .lvl1 { border-left: 0; }
.grid .last th { height: 50px; }
.grid tbody th { text-align: left; }
.htext { display: flex; justify-content: center; white-space: nowrap; }
.htext + .htext { margin-top: 1px; }
.grid .lvl1 { padding-left: 1px; white-space: nowrap; }
.grid .lvl3 { padding-left: 1px; white-space: nowrap; }
.grid .lvl2 { padding-left: 1px; line-height: 16px; }
.grid .g { background: #d1d1d1; }
.grid .t { background: linear-gradient(to top right, #a0a0a0 50%, transparent 51%) left bottom / 6px 6px no-repeat; }
.grid .end { border-top: 0; }
.grid .end.first { border-top: 1px solid #b9bbaa; }
.grid .tall td { height: 33px; }
.grid .double td { height: 32px; }
.rest { flex: 1; display: flex; }
.resthead { flex: none; width: 308px; border-top: 1px solid #b9bbaa; border-right: 1px solid #b9bbaa; background: #fafafa; }
.restline { width: 1050px; border-top: 1px solid #b9bbaa; }
.undertabs { flex: none; height: 25px; padding: 0 6px; }
.errors .undertabs { height: 23px; }
.undertab { display: flex; align-items: center; width: 181px; height: 21px; margin-top: -1px; padding: 4px 10px 0 12px; background: linear-gradient(#e5e5e5, #fff); border: 1px solid #939393; border-top: 0; border-radius: 0 0 4px 4px; }
.undertab.doc { width: 544px; height: 23px; padding: 4px 0 0 12px; gap: 5px; }
.undertab svg { color: #555; }
.hint { flex: none; margin: 0; height: 15px; padding-left: 1px; color: #444; line-height: 16px; border-top: 1px solid #e5e5e5; }
.errframe { flex: 1; min-height: 0; display: flex; margin: 0 1px 0 2px; padding: 9px 9px 9px 10px; border: 1px solid #939393; background: #e5e5e5; }
.errbox { flex: 1; padding-right: 42px; border: 1px solid #808080; background: linear-gradient(#fff, #fff) no-repeat left / calc(100% - 42px) 100%; }
.errtable { width: 100%; table-layout: fixed; border-spacing: 0; }
.errtable th { height: 21px; padding: 2px 1px 0; text-align: left; font-weight: 400; background: #e5e5e5; border: 1px solid #fff; border-right-color: #808080; border-bottom-color: #808080; }
.e0 { width: 19px; }
.e1 { width: 400px; }
.e2 { width: 200px; }
.e3 { width: 100px; }
.e4 { width: 300px; }

.status { flex: none; display: flex; height: 48px; padding: 9px 15px 0 9px; background: #e5e5e5; border-top: 4px solid #363840; }
.path { flex: 1; min-width: 0; overflow: hidden; white-space: nowrap; }
.ctx { flex: none; width: 377px; margin-left: 19px; text-align: right; white-space: nowrap; }
.mode { display: flex; justify-content: flex-end; gap: 4px; }
</style>
